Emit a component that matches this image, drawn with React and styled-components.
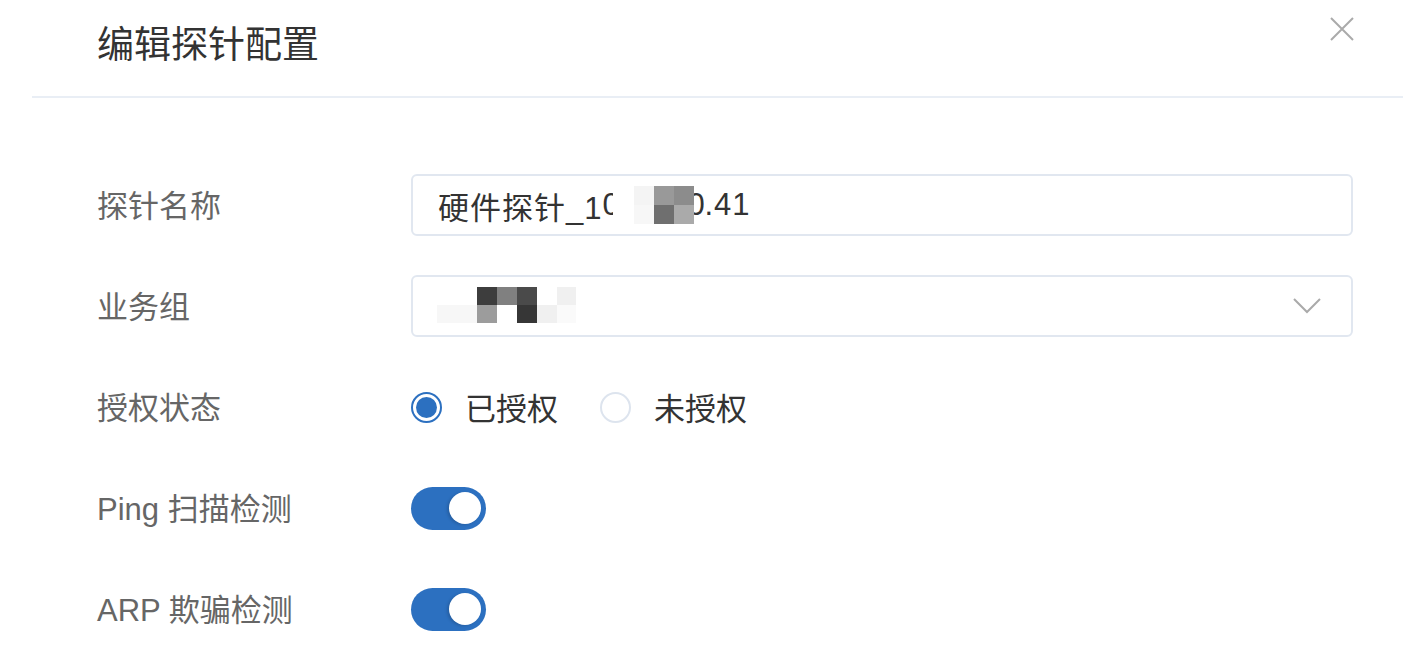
import React, { useState } from "react";
import styled, { createGlobalStyle } from "styled-components";

const Global = createGlobalStyle`
  html, body {
    margin: 0;
    background: #fff;
    font-family: "Liberation Sans", "Noto Sans CJK SC", Arial, sans-serif;
  }
`;

const Dialog = styled.div`
  width: 1426px;
  height: 672px;
  box-sizing: border-box;
  padding: 0 23px 0 32px;
  background: #fff;
  overflow: hidden;
`;

const Header = styled.div`
  height: 96px;
  display: flex;
  align-items: center;
  padding-left: 65px;
  border-bottom: 2px solid #e9eef5;
  position: relative;
`;

const Title = styled.h2`
  margin: 0 0 12px;
  font-size: 37px;
  font-weight: 400;
  color: #333;
`;

const Close = styled.button`
  position: absolute;
  right: 49px;
  top: 17px;
  width: 24px;
  height: 24px;
  padding: 0;
  border: 0;
  background: none;
  cursor: pointer;
`;

const Form = styled.div`
  padding: 76px 50px 0 65px;
  display: flex;
  flex-direction: column;
  gap: 39px;
`;

const Row = styled.div`
  display: flex;
  align-items: center;
  height: 62px;
`;

const Label = styled.div`
  width: 314px;
  flex-shrink: 0;
  font-size: 31px;
  color: #666;
  margin-top: -3px;
`;

const Field = styled.div`
  flex: 1;
  height: 62px;
  box-sizing: border-box;
  border: 2px solid #e1e7f0;
  border-radius: 6px;
  display: flex;
  align-items: center;
  padding: 0 25px;
  font-size: 31px;
  letter-spacing: 1px;
  color: #333;
  position: relative;
`;

const Clip = styled.span`
  display: inline-block;
  width: ${(p) => p.$w}px;
  overflow: hidden;
  white-space: nowrap;
  & > span {
    display: inline-block;
    margin-left: ${(p) => p.$shift || 0}px;
  }
`;

const Mosaic = styled.span`
  display: inline-grid;
  grid-template-columns: ${(p) => p.$cols};
  grid-auto-rows: ${(p) => p.$h}px;
  margin-left: ${(p) => p.$ml || 0}px;
  margin-top: ${(p) => p.$mt || 0}px;
`;

const Cell = styled.span`
  background: ${(p) => p.$c};
`;

const Chevron = styled.svg`
  position: absolute;
  right: 30px;
  top: 50%;
  transform: translateY(-50%);
`;

const RadioGroup = styled.div`
  display: flex;
  align-items: center;
  gap: 42px;
`;

const RadioItem = styled.label`
  display: flex;
  align-items: center;
  gap: 23px;
  font-size: 31px;
  color: #333;
  cursor: pointer;
  margin-top: -2px;
`;

const Dot = styled.span`
  width: 31px;
  height: 31px;
  box-sizing: border-box;
  border-radius: 50%;
  border: 2px solid ${(p) => (p.$on ? "#2c70c0" : "#dde4ee")};
  display: flex;
  align-items: center;
  justify-content: center;
  margin-top: 2px;
  &::after {
    content: "";
    width: 21px;
    height: 21px;
    border-radius: 50%;
    background: ${(p) => (p.$on ? "#2c70c0" : "transparent")};
  }
`;

const Switch = styled.button`
  width: 75px;
  height: 43px;
  border-radius: 22px;
  border: 0;
  padding: 0 5px;
  display: flex;
  align-items: center;
  justify-content: ${(p) => (p.$on ? "flex-end" : "flex-start")};
  background: ${(p) => (p.$on ? "#2c70c0" : "#dcdfe6")};
  cursor: pointer;
  &::after {
    content: "";
    width: 32px;
    height: 32px;
    border-radius: 50%;
    background: #fff;
    box-shadow: -2px 1px 3px rgba(0, 0, 0, 0.15);
  }
`;

const inputCells = [
  "#fff", "#f4f4f4", "#999", "#8c8c8c",
  "#fff", "#f7f7f7", "#6f6f6f", "#aaa",
];
const groupCells = [
  "#fff", "#3d3d3d", "#808080", "#4a4a4a", "#fff", "#f0f0f0",
  "#f7f7f7", "#9c9c9c", "#fff", "#363636", "#f0f0f0", "#fafafa",
];

export default function App() {
  const [auth, setAuth] = useState(true);
  const [ping, setPing] = useState(true);
  const [arp, setArp] = useState(true);
  return (
    <>
      <Global />
      <Dialog>
        <Header>
          <Title>编辑探针配置</Title>
          <Close aria-label="close">
            <svg width="24" height="24" viewBox="0 0 24 24">
              <path d="M1 1L23 23M23 1L1 23" stroke="#aaa" strokeWidth="2" />
            </svg>
          </Close>
        </Header>
        <Form>
          <Row>
            <Label>探针名称</Label>
            <Field>
              硬件探针_1
              <Clip $w={11}>
                <span>0</span>
              </Clip>
              <Mosaic $cols="20px 20px 20px 20px" $h={19} $ml={1}>
                {inputCells.map((c, i) => (
                  <Cell key={i} $c={c} />
                ))}
              </Mosaic>
              <Clip $w={10} $shift={-7}>
                <span>0</span>
              </Clip>
              .41
            </Field>
          </Row>
          <Row>
            <Label>业务组</Label>
            <Field>
              <Mosaic $cols="40px 20px 20px 20px 20px 19px" $h={18} $ml={-1} $mt={-3}>
                {groupCells.map((c, i) => (
                  <Cell key={i} $c={c} />
                ))}
              </Mosaic>
              <Chevron width="28" height="16" viewBox="0 0 28 16">
                <path d="M1 1L14 14L27 1" fill="none" stroke="#aaa" strokeWidth="2" />
              </Chevron>
            </Field>
          </Row>
          <Row>
            <Label>授权状态</Label>
            <RadioGroup>
              <RadioItem onClick={() => setAuth(true)}>
                <Dot $on={auth} />
                已授权
              </RadioItem>
              <RadioItem onClick={() => setAuth(false)}>
                <Dot $on={!auth} />
                未授权
              </RadioItem>
            </RadioGroup>
          </Row>
          <Row>
            <Label>Ping 扫描检测</Label>
            <Switch $on={ping} onClick={() => setPing(!ping)} />
          </Row>
          <Row>
            <Label>ARP 欺骗检测</Label>
            <Switch $on={arp} onClick={() => setArp(!arp)} />
          </Row>
        </Form>
      </Dialog>
    </>
  );
}
